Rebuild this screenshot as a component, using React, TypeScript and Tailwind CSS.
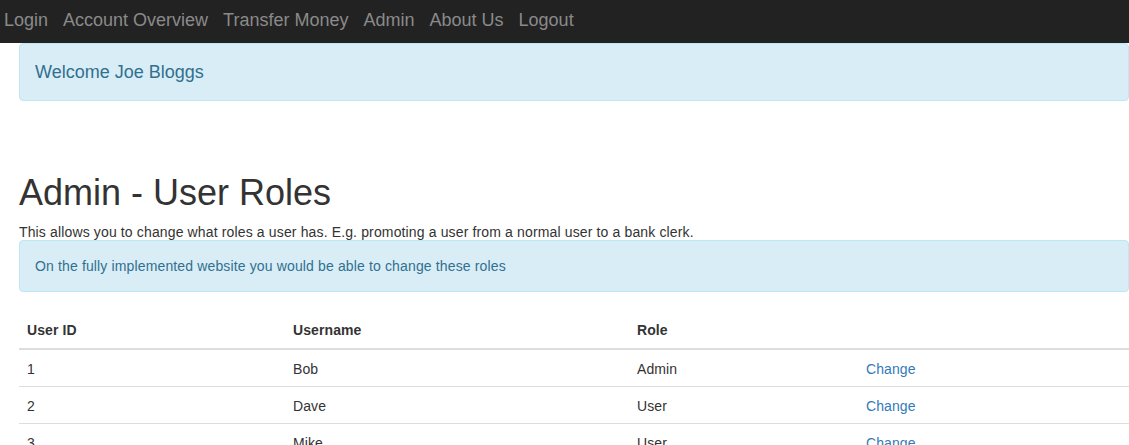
const navLinks = ["Login", "Account Overview", "Transfer Money", "Admin", "About Us", "Logout"];

const users = [
  { id: 1, name: "Bob", role: "Admin" },
  { id: 2, name: "Dave", role: "User" },
  { id: 3, name: "Mike", role: "User" },
];

export default function App() {
  return (
    <div className="min-h-screen bg-white text-[14px] leading-[20px] text-[#333] font-['Liberation_Sans',Arial,sans-serif]">
      {/* Top nav */}
      <nav className="h-[43px] bg-[#222] flex items-center pl-[4px] pb-[3px] gap-[15px]">
        {navLinks.map((link) => (
          <a key={link} href="#" className="text-[18px] leading-[20px] text-[#8a8a8a] hover:text-white">
            {link}
          </a>
        ))}
      </nav>

      <div className="pl-[19px]">
        <div className="w-[1110px]">
          <div className="px-[15px] pt-[16px] pb-[14px] bg-[#d9edf7] border border-[#bce8f1] rounded-[4px] text-[#31708f] text-[18px] leading-[25.7px]">
            Welcome Joe Bloggs
          </div>

          <h1 className="mt-[72px] mb-[10px] text-[36px] leading-[39.6px] font-medium">Admin - User Roles</h1>
          <p className="-mb-[2px] tracking-[0.14px]">
            This allows you to change what roles a user has. E.g. promoting a user from a normal user to a bank clerk.
          </p>

          <div className="mb-[20px] p-[15px] bg-[#d9edf7] border border-[#bce8f1] rounded-[4px] text-[#31708f] tracking-[0.14px]">
            On the fully implemented website you would be able to change these roles
          </div>

          {/* Roles table */}
          <table className="w-full border-collapse text-left tracking-[0.1px]">
            <thead>
              <tr className="border-b-2 border-[#ddd]">
                <th className="w-[266px] p-[8px] font-bold">User ID</th>
                <th className="w-[344px] p-[8px] font-bold">Username</th>
                <th className="w-[229px] p-[8px] font-bold">Role</th>
                <th className="p-[8px]"></th>
              </tr>
            </thead>
            <tbody>
              {users.map((u) => (
                <tr key={u.id} className="border-t border-[#ddd]">
                  <td className="px-[8px] pt-[9px] pb-[7px]">{u.id}</td>
                  <td className="px-[8px] pt-[9px] pb-[7px]">{u.name}</td>
                  <td className="px-[8px] pt-[9px] pb-[7px]">{u.role}</td>
                  <td className="px-[8px] pt-[9px] pb-[7px]">
                    <a href="#" className="text-[#337ab7]">Change</a>
                  </td>
                </tr>
              ))}
            </tbody>
          </table>
        </div>
      </div>
    </div>
  );
}
